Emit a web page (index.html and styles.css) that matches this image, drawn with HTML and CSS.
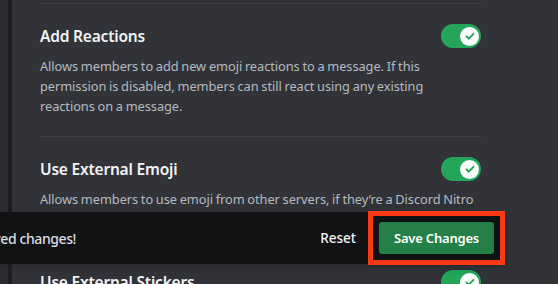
FILE: index.html
```html
<!DOCTYPE html>
<html lang="en">

<head>
    <meta charset="UTF-8">
    <meta name="viewport" content="width=device-width, initial-scale=1.0">
    <title>Server Settings - Permissions</title>
    <link rel="stylesheet" href="styles.css">
</head>

<body>
    <div class="layout">
        <div class="sidebar"></div>
        <main class="content">
            <section class="perm">
                <div class="perm-row">
                    <h3>Add Reactions</h3>
                    <span class="toggle">
                        <span class="knob">
                            <svg viewBox="0 0 20 20" width="14" height="14"><path d="M5 10.5l3.2 3.2L15 7" /></svg>
                        </span>
                    </span>
                </div>
                <p class="perm-desc">Allows members to add new emoji reactions to a message. If this permission is disabled, members can still react using any existing reactions&nbsp;on a message.</p>
            </section>
            <section class="perm">
                <div class="perm-row">
                    <h3>Use External Emoji</h3>
                    <span class="toggle">
                        <span class="knob">
                            <svg viewBox="0 0 20 20" width="14" height="14"><path d="M5 10.5l3.2 3.2L15 7" /></svg>
                        </span>
                    </span>
                </div>
                <p class="perm-desc">Allows members to use emoji from other servers, if they’re a Discord Nitro member.</p>
            </section>
            <section class="perm">
                <div class="perm-row">
                    <h3>Use External Stickers</h3>
                    <span class="toggle">
                        <span class="knob">
                            <svg viewBox="0 0 20 20" width="14" height="14"><path d="M5 10.5l3.2 3.2L15 7" /></svg>
                        </span>
                    </span>
                </div>
                <p class="perm-desc">Allows members to use stickers from other servers, if they’re a Discord Nitro member.</p>
            </section>
        </main>
    </div>

    <div class="notice">
        <div class="notice-text"><span>Careful — you have unsaved changes!</span></div>
        <button class="reset">Reset</button>
        <div class="highlight">
            <button class="save">Save Changes</button>
        </div>
    </div>
</body>

</html>
```

FILE: styles.css
```css
:root {
    --background: #313338;
    --sidebar: #2b2d31;
    --edge: #1e1f22;
    --divider: #3f4147;
    --title: #f2f3f5;
    --text: #b5bac1;
    --green: #23a55a;
    --button: #248046;
    --notice: #111214;
    --marker: #fa3a17;
    --font: "Noto Sans", "Open Sans", sans-serif;
}

html,
body {
    margin: 0;
    height: 100%;
    overflow: hidden;
}

body {
    background-color: var(--background);
    font-family: var(--font);
    position: relative;
}

.layout {
    display: flex;
    min-height: 100%;
}

.sidebar {
    width: 8px;
    background-color: var(--sidebar);
    border-right: 4px solid var(--edge);
}

.content {
    padding: 3px 0 0 28px;
    width: 441px;
}

.perm {
    border-top: 1px solid var(--divider);
    padding: 20px 0;
}

.perm-row {
    display: flex;
    align-items: center;
    justify-content: space-between;
    height: 24px;
}

.perm-row h3 {
    margin: 0;
    font-size: 15.5px;
    letter-spacing: -0.2px;
    line-height: 20px;
    font-weight: 600;
    color: var(--title);
}

.perm-desc {
    margin: 8px 0 0;
    font-size: 12.8px;
    letter-spacing: -0.06px;
    word-spacing: -0.5px;
    line-height: 20px;
    color: var(--text);
}

.toggle {
    width: 40px;
    height: 24px;
    border-radius: 12px;
    background-color: var(--green);
    display: flex;
    align-items: center;
    justify-content: flex-end;
    padding-right: 2px;
    box-sizing: border-box;
}

.knob {
    width: 19px;
    height: 19px;
    border-radius: 50%;
    background-color: #fff;
    display: flex;
    align-items: center;
    justify-content: center;
}

.knob path {
    fill: none;
    stroke: var(--green);
    stroke-width: 2.8;
    stroke-linecap: round;
    stroke-linejoin: round;
}

/* unsaved changes bar, floats over the list */
.notice {
    position: absolute;
    left: 0;
    top: 212px;
    width: 505px;
    height: 52px;
    background-color: var(--notice);
    border-radius: 0 5px 5px 0;
    box-shadow: 0 2px 10px rgba(0, 0, 0, 0.25);
    display: flex;
    align-items: center;
}

.notice-text {
    width: 76px;
    display: flex;
    justify-content: flex-end;
    white-space: nowrap;
    font-size: 14px;
    letter-spacing: -0.4px;
    font-weight: 500;
    color: #dbdee1;
}

.reset {
    margin-left: auto;
    margin-right: 12px;
    background: none;
    border: none;
    padding: 0;
    font-family: var(--font);
    font-size: 13.5px;
    font-weight: 500;
    color: #f2f3f5;
}

.highlight {
    border: 5px solid var(--marker);
    padding: 6px;
    background-color: var(--notice);
    display: flex;
}

.save {
    width: 115px;
    height: 32px;
    border: none;
    border-radius: 3px;
    background-color: var(--button);
    font-family: var(--font);
    font-size: 13px;
    letter-spacing: -0.2px;
    font-weight: 600;
    color: #fff;
    padding: 0;
}
```
